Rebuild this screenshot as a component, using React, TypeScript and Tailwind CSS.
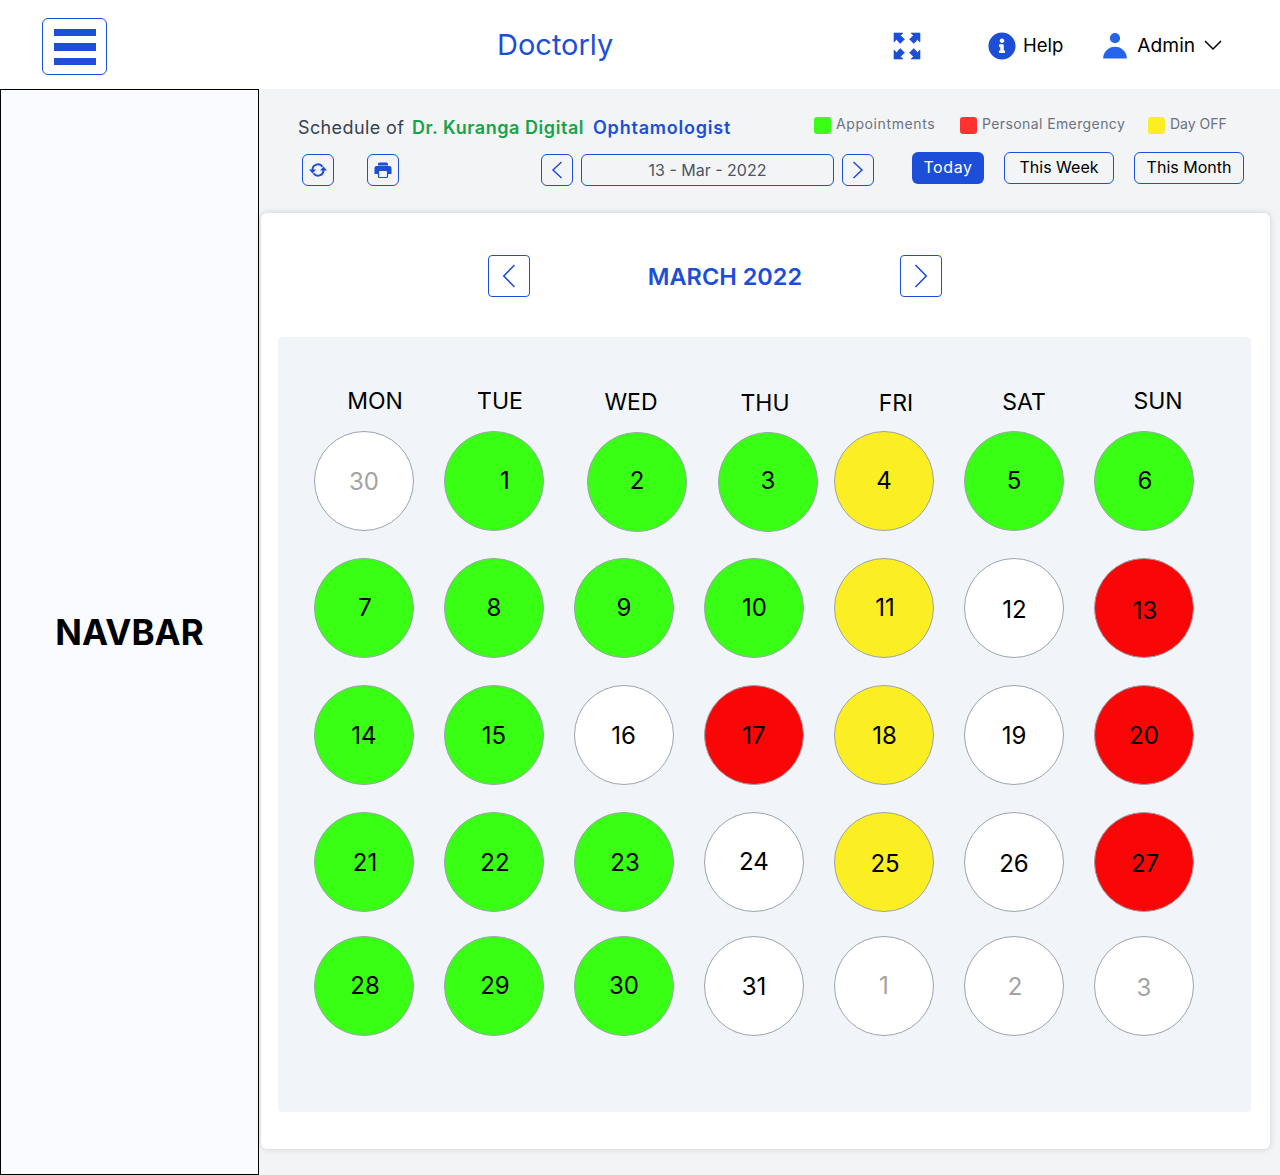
import type { ReactNode } from "react";
import { FaInfoCircle } from "react-icons/fa";
import { HiUser } from "react-icons/hi";

type Day = { n: number; c: string; x?: string; m?: string };

const G = "bg-[#39ff14] text-black";
const Y = "bg-[#fbee23] text-black";
const R = "bg-[#f90606] text-black";
const W = "bg-white text-black";
const M = "bg-white text-[#a3a3a3]";

const rows: { cls: string; days: Day[] }[] = [
  {
    cls: "",
    days: [
      { n: 30, c: M, x: "pt-[2px]" },
      { n: 1, c: G, x: "pl-[22px]" },
      { n: 2, c: G, m: "ml-[13px] mt-[1px]", x: "pb-[2px]" },
      { n: 3, c: G, m: "ml-[1px] mt-[1px]", x: "pb-[2px]" },
      { n: 4, c: Y, m: "-ml-[14px]" },
      { n: 5, c: G },
      { n: 6, c: G, x: "pl-[2px]" },
    ],
  },
  {
    cls: "mt-[26px]",
    days: [
      { n: 7, c: G, x: "pl-[2px]" },
      { n: 8, c: G },
      { n: 9, c: G },
      { n: 10, c: G, x: "pl-[1px]" },
      { n: 11, c: Y, x: "pl-[2px]" },
      { n: 12, c: W, x: "pt-[4px] pl-[1px]" },
      { n: 13, c: R, x: "pl-[2px] pt-[6px]" },
    ],
  },
  {
    cls: "mt-[27px]",
    days: [
      { n: 14, c: G, x: "pt-[2px]" },
      { n: 15, c: G, x: "pt-[2px]" },
      { n: 16, c: W, x: "pt-[2px] pr-[1px]" },
      { n: 17, c: R, x: "pt-[2px]" },
      { n: 18, c: Y, x: "pt-[2px] pl-[1px]" },
      { n: 19, c: W, x: "pt-[2px]" },
      { n: 20, c: R, x: "pt-[2px]" },
    ],
  },
  {
    cls: "mt-[27px]",
    days: [
      { n: 21, c: G, x: "pl-[2px] pt-[2px]" },
      { n: 22, c: G, x: "pl-[2px] pt-[2px]" },
      { n: 23, c: G, x: "pl-[2px] pt-[2px]" },
      { n: 24, c: W },
      { n: 25, c: Y, x: "pl-[2px] pt-[4px]" },
      { n: 26, c: W, x: "pt-[4px]" },
      { n: 27, c: R, x: "pl-[2px] pt-[4px]" },
    ],
  },
  {
    cls: "mt-[24px]",
    days: [
      { n: 28, c: G, x: "pl-[2px]" },
      { n: 29, c: G, x: "pl-[2px]" },
      { n: 30, c: G },
      { n: 31, c: W, x: "pt-[2px]" },
      { n: 1, c: M },
      { n: 2, c: M, x: "pl-[2px] pt-[2px]" },
      { n: 3, c: M, x: "pt-[4px]" },
    ],
  },
];

const heads = [
  { t: "MON", c: "w-[130px]" },
  { t: "TUE", c: "w-[120px]" },
  { t: "WED", c: "w-[142px] pt-[1px]" },
  { t: "THU", c: "w-[126px] pt-[2px]" },
  { t: "FRI", c: "w-[136px] pt-[2px]" },
  { t: "SAT", c: "w-[120px] pt-[1px]" },
  { t: "SUN", c: "w-[148px]" },
];

const IconBtn = ({ children }: { children: ReactNode }) => (
  <button className="flex h-[32px] w-[32px] items-center justify-center rounded-[6px] border border-[#1d4ed8] text-[#1d4ed8]">
    {children}
  </button>
);

const arrow = "M1 1H10L7.5 3.5L11.5 7.2L7.2 11.5L3.5 7.5L1 10Z";

const ExpandIcon = () => (
  <svg width="28" height="28" viewBox="0 0 28 28" className="shrink-0 text-[#1d4ed8]" fill="currentColor" stroke="currentColor" strokeWidth="0.6" strokeLinejoin="round">
    <path d={arrow} />
    <path d={arrow} transform="rotate(90 14 14)" />
    <path d={arrow} transform="rotate(180 14 14)" />
    <path d={arrow} transform="rotate(270 14 14)" />
  </svg>
);

const SyncIcon = () => (
  <svg width="18" height="16" viewBox="0 0 18 16" className="text-[#1d4ed8]">
    <g fill="none" stroke="currentColor" strokeWidth="2">
      <path d="M3.5 8A5.5 5.5 0 0 1 13.5 4.7" />
      <path d="M14.5 8A5.5 5.5 0 0 1 4.5 11.3" />
    </g>
    <path d="M0 7.5H7L3.5 11.5Z" fill="currentColor" />
    <path d="M11 8.5H18L14.5 4.5Z" fill="currentColor" />
  </svg>
);

const PrintIcon = () => (
  <svg width="18" height="16" viewBox="0 0 18 16" className="text-[#1d4ed8]">
    <path d="M4 3.5V2A1.5 1.5 0 0 1 5.5 .5H12.5A1.5 1.5 0 0 1 14 2V3.5Z" fill="currentColor" />
    <path d="M2.5 4H15.5A2 2 0 0 1 17.5 6V12H.5V6A2 2 0 0 1 2.5 4Z" fill="currentColor" />
    <rect x="4.5" y="8.5" width="9" height="7" rx="1" fill="#f3f4f6" stroke="currentColor" strokeWidth="1.2" />
  </svg>
);

const ChevL = ({ big }: { big?: boolean }) =>
  big ? (
    <svg width="14" height="26" viewBox="0 0 14 26" fill="none" stroke="currentColor" strokeWidth="1.6">
      <path d="M12.5 2L1.8 13L12.5 24" />
    </svg>
  ) : (
    <svg width="12" height="20" viewBox="0 0 12 20" fill="none" stroke="currentColor" strokeWidth="1.5">
      <path d="M10.5 2L2 10L10.5 18" />
    </svg>
  );

const ChevR = ({ big }: { big?: boolean }) =>
  big ? (
    <svg width="14" height="26" viewBox="0 0 14 26" fill="none" stroke="currentColor" strokeWidth="1.6">
      <path d="M1.5 2L12.2 13L1.5 24" />
    </svg>
  ) : (
    <svg width="12" height="20" viewBox="0 0 12 20" fill="none" stroke="currentColor" strokeWidth="1.5">
      <path d="M1.5 2L10 10L1.5 18" />
    </svg>
  );

export default function App() {
  return (
    <div className="flex h-[1175px] w-[1280px] flex-col overflow-hidden bg-white font-['Inter',sans-serif]">
      <header className="flex h-[89px] shrink-0 items-center bg-white">
        <button className="ml-[42px] mt-[4px] flex h-[57px] w-[65px] flex-col items-center justify-center gap-[7px] rounded-[6px] border border-[#1d4ed8]">
          <span className="block h-[7px] w-[42px] bg-[#1d4ed8]" />
          <span className="block h-[8px] w-[42px] bg-[#1d4ed8]" />
          <span className="block h-[7px] w-[42px] bg-[#1d4ed8]" />
        </button>
        <div className="ml-[390px] w-[396px] text-[29px] leading-none text-[#1d4ed8]">Doctorly</div>
        <div className="mt-[2px]">
          <ExpandIcon />
        </div>
        <FaInfoCircle className="ml-[67px] mt-[2px] h-[28px] w-[28px] text-[#1d4ed8]" />
        <span className="ml-[7px] mt-[2px] text-[18.5px] text-black">Help</span>
        <HiUser className="ml-[35px] h-[34px] w-[34px] text-[#2563eb]" />
        <span className="ml-[5px] mt-[1px] text-[19.2px] text-black">Admin</span>
        <svg width="20" height="12" viewBox="0 0 20 12" fill="none" stroke="#000" strokeWidth="1.5" className="ml-[8px]">
          <path d="M2 2L10 10L18 2" />
        </svg>
      </header>

      <div className="flex min-h-0 flex-1">
        <aside className="flex w-[259px] shrink-0 items-center justify-center border border-black bg-[#f9fbff] text-[35px] font-bold text-black">
          NAVBAR
        </aside>

        <main className="flex flex-1 flex-col bg-[#f3f4f6]">
          <div className="h-[124px] shrink-0 pt-[23px]">
            <div className="flex h-[30px] items-center pl-[39px]">
              <span className="w-[114px] text-[18px] tracking-[0.38px] text-[#374151]">Schedule of</span>
              <span className="w-[181px] text-[18px] font-semibold tracking-[0.55px] text-[#16a34a]">Dr. Kuranga Digital</span>
              <span className="w-[221px] text-[18px] font-semibold tracking-[0.78px] text-[#1d4ed8]">Ophtamologist</span>
              <div className="mb-[3px] flex items-center text-[14px] text-[#6b7280]">
                <span className="h-[17px] w-[17px] rounded-[3px] bg-[#39ff14]" />
                <span className="ml-[5px] w-[124px] pb-[5px] tracking-[0.6px]">Appointments</span>
                <span className="h-[17px] w-[17px] rounded-[3px] bg-[#ff3131]" />
                <span className="ml-[5px] w-[166px] pb-[5px] tracking-[0.4px]">Personal Emergency</span>
                <span className="h-[17px] w-[17px] rounded-[3px] bg-[#fbee23]" />
                <span className="ml-[5px] pb-[5px]">Day OFF</span>
              </div>
            </div>
            <div className="mt-[10px] flex items-start pl-[43px]">
              <div className="mt-[2px] flex gap-[33px]">
                <IconBtn>
                  <SyncIcon />
                </IconBtn>
                <IconBtn>
                  <PrintIcon />
                </IconBtn>
              </div>
              <div className="ml-[142px] mt-[2px] flex gap-[8px]">
                <IconBtn>
                  <ChevL />
                </IconBtn>
                <div className="flex h-[32px] w-[253px] items-center justify-center rounded-[6px] border border-[#1d4ed8] text-[16px] text-[#4b5563]">
                  13 - Mar - 2022
                </div>
                <IconBtn>
                  <ChevR />
                </IconBtn>
              </div>
              <button className="ml-[38px] h-[32px] w-[72px] rounded-[6px] bg-[#1d4ed8] pb-[2px] text-[16px] tracking-[0.6px] text-white">Today</button>
              <button className="ml-[20px] h-[32px] w-[110px] rounded-[6px] border border-[#1d4ed8] pb-[2px] text-[16px] text-black">This Week</button>
              <button className="ml-[20px] h-[32px] w-[110px] rounded-[6px] border border-[#1d4ed8] pb-[2px] text-[16px] text-black">This Month</button>
            </div>
          </div>

          <section className="ml-[2px] h-[936px] w-[1009px] shrink-0 rounded-[6px] bg-white px-[17px] pt-[42px] shadow-[0_0_6px_rgba(0,0,0,0.16)]">
            <div className="flex h-[42px] items-center pl-[210px]">
              <button className="flex h-[42px] w-[42px] items-center justify-center rounded-[4px] border border-[#1d4ed8] text-[#1d4ed8]">
                <ChevL big />
              </button>
              <h1 className="w-[370px] pl-[20px] pt-[2px] text-center text-[23.5px] font-semibold text-[#1d4ed8]">MARCH 2022</h1>
              <button className="flex h-[42px] w-[42px] items-center justify-center rounded-[4px] border border-[#1d4ed8] text-[#1d4ed8]">
                <ChevR big />
              </button>
            </div>

            <div className="mt-[40px] h-[775px] w-[973px] rounded-[4px] bg-[#f1f5f9] pt-[48px]">
              <div className="mb-[14px] flex h-[32px] pl-[32px] text-[23px] leading-[32px] text-black">
                {heads.map((h) => (
                  <div key={h.t} className={`text-center ${h.c}`}>
                    {h.t}
                  </div>
                ))}
              </div>
              {rows.map((r, i) => (
                <div key={i} className={`flex items-start gap-[30px] pl-[36px] ${r.cls}`}>
                  {r.days.map((d, j) => (
                    <div
                      key={j}
                      className={`flex h-[100px] w-[100px] shrink-0 items-center justify-center rounded-full border border-[#9ca3af] text-[24px] ${d.c} ${d.x ?? ""} ${d.m ?? ""}`}
                    >
                      {d.n}
                    </div>
                  ))}
                </div>
              ))}
            </div>
          </section>
        </main>
      </div>
    </div>
  );
}
